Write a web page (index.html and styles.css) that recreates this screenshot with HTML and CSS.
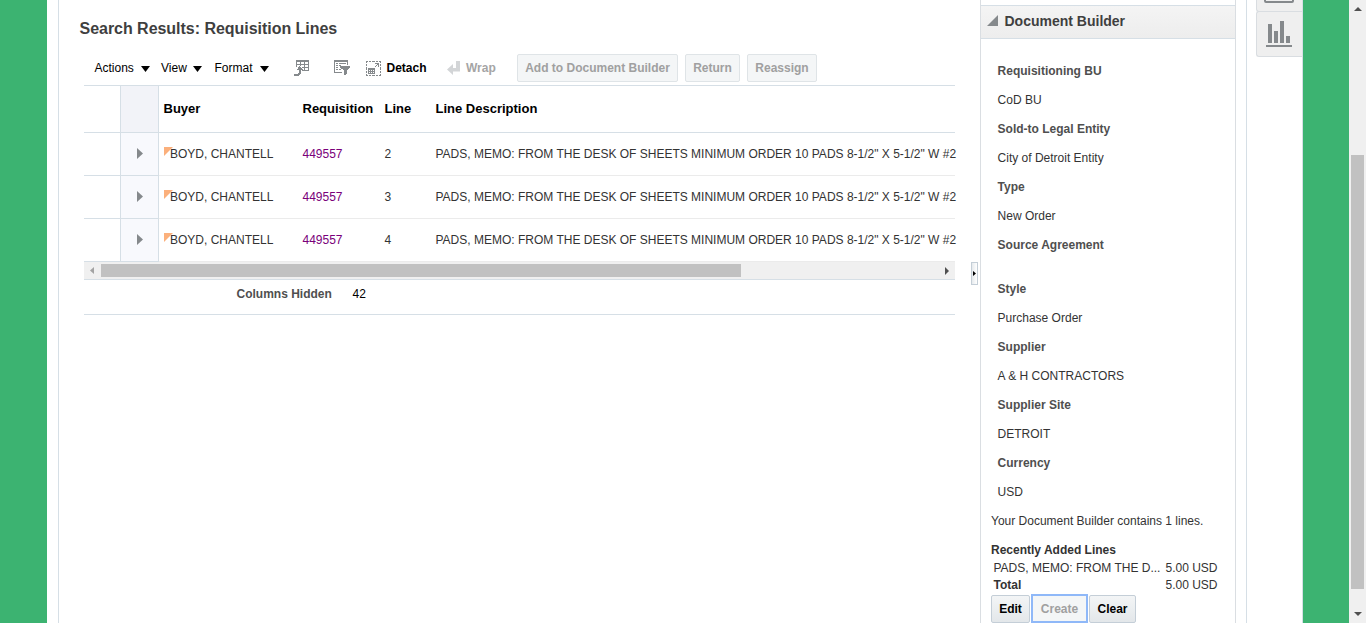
FILE: index.html
```html
<!DOCTYPE html>
<html lang="en">
<head>
<meta charset="utf-8">
<title>Requisition Lines</title>
<link rel="stylesheet" href="styles.css">
</head>
<body>
<div class="page">
  <div class="band"></div>
  <div class="gutter"></div>
  <main class="main">
    <h1 class="title">Search Results: Requisition Lines</h1>
    <div class="toolbar">
      <span class="menu actions">Actions<svg width="9" height="6" viewBox="0 0 9 6"><path d="M0 0h9L4.500 6z"/></svg></span>
      <span class="menu view">View<svg width="9" height="6" viewBox="0 0 9 6"><path d="M0 0h9L4.500 6z"/></svg></span>
      <span class="menu format">Format<svg width="9" height="6" viewBox="0 0 9 6"><path d="M0 0h9L4.500 6z"/></svg></span>
      <svg class="icon export" width="16" height="16" viewBox="0 0 16 16" shape-rendering="crispEdges" fill="#85898c">
        <path d="M2 0h13v2H2zM2 2h1v5H2zM6 2h1v4H6zM10 2h1v9h-1zM14 2h1v9h-1zM2 4h13v1H2zM8 7h7v1H8zM8 10h7v1H8z"/>
        <path d="M5 6h1v1h1v1h1v1h1v1H7v4H6v1H5v1H0v-2h4v-1h1v-3H3V9h1V7h1z"/>
      </svg>
      <svg class="icon query" width="17" height="16" viewBox="0 0 17 16" shape-rendering="crispEdges" fill="#85898c">
        <path d="M0 0h14v2H0zM0 2h1v11H0zM13 2h1v3h-1zM0 12h8v1H0zM2 3h2v1H2zM5 3h7v1H5zM2 5h2v1H2zM5 5h2v1H5zM2 7h2v1H2zM2 9h2v1H2zM5 9h2v1H5z"/>
        <path d="M6 6h10v2h-1v1h-1v1h-1v4h-1v1h-2v-5H9V9H7V8H6z"/>
      </svg>
      <svg class="icon detach" width="15" height="15" viewBox="0 0 15 15" shape-rendering="crispEdges" fill="#85898c">
        <path d="M0 0h2v1H0zM3 0h2v1H3zM6 0h3v1H6zM10 0h2v1h-2zM13 0h2v1h-2zM0 14h2v1H0zM3 14h2v1H3zM6 14h3v1H6zM10 14h2v1h-2zM13 14h2v1h-2zM0 0h1v2H0zM0 3h1v2H0zM0 6h1v3H0zM0 10h1v2H0zM0 13h1v2H0zM14 0h1v2h-1zM14 3h1v2h-1zM14 6h1v3h-1zM14 10h1v2h-1zM14 13h1v2h-1z"/>
        <path d="M2 7h7v2H2zM2 9h1v4H2zM4 9h1v4H4zM6 9h1v4H6zM8 9h1v4H8zM2 10h7v1H2zM2 12h7v1H2zM9 2h4v4h-1V4h-1v1h-1v1H9V5h1V4h1V3H9z"/>
      </svg>
      <b class="detach-text">Detach</b>
      <svg class="icon wrap" width="13" height="14" viewBox="0 0 13 14" fill="#d3d5d7"><path d="M9 0h4v10.500H6V14L0 8.500 6 3v4h3z"/></svg>
      <b class="wrap-text">Wrap</b>
      <button class="btn off add">Add to Document Builder</button>
      <button class="btn off ret">Return</button>
      <button class="btn off rea">Reassign</button>
    </div>
    <section class="table">
      <div class="row head"><i></i><i class="mark"></i><b>Buyer</b><b>Requisition</b><b>Line</b><b>Line Description</b></div>
      <div class="row"><i></i><i class="mark"><svg width="6" height="11" viewBox="0 0 6 11"><path d="M0 0l6 5.500L0 11z"/></svg></i><span class="buyer">BOYD, CHANTELL</span><a>449557</a><span>2</span><span class="desc">PADS, MEMO: FROM THE DESK OF SHEETS MINIMUM ORDER 10 PADS 8-1/2" X 5-1/2" W #2</span></div>
      <div class="row"><i></i><i class="mark"><svg width="6" height="11" viewBox="0 0 6 11"><path d="M0 0l6 5.500L0 11z"/></svg></i><span class="buyer">BOYD, CHANTELL</span><a>449557</a><span>3</span><span class="desc">PADS, MEMO: FROM THE DESK OF SHEETS MINIMUM ORDER 10 PADS 8-1/2" X 5-1/2" W #2</span></div>
      <div class="row"><i></i><i class="mark"><svg width="6" height="11" viewBox="0 0 6 11"><path d="M0 0l6 5.500L0 11z"/></svg></i><span class="buyer">BOYD, CHANTELL</span><a>449557</a><span>4</span><span class="desc">PADS, MEMO: FROM THE DESK OF SHEETS MINIMUM ORDER 10 PADS 8-1/2" X 5-1/2" W #2</span></div>
      <div class="hscroll"><svg width="4" height="7" viewBox="0 0 4 7" fill="#a3a3a3"><path d="M4 0v7L0 3.500z"/></svg><div class="hthumb"></div><svg class="right" width="4" height="8" viewBox="0 0 4 8" fill="#505050"><path d="M0 0v8l4-4z"/></svg></div>
      <div class="hidden-cols"><b>Columns Hidden</b><span>42</span></div>
    </section>
    <div class="splitter"><svg width="3" height="5" viewBox="0 0 3 5"><path d="M0 0v5l3-2.500z"/></svg></div>
  </main>
  <aside class="panel">
    <header class="panel-head"><svg width="11" height="11" viewBox="0 0 11 11" fill="#85898c"><path d="M11 0v11H0z"/></svg><b>Document Builder</b></header>
    <dl class="fields">
      <dt>Requisitioning BU</dt><dd>CoD BU</dd>
      <dt>Sold-to Legal Entity</dt><dd>City of Detroit Entity</dd>
      <dt>Type</dt><dd>New Order</dd>
      <dt>Source Agreement</dt><dd class="empty"></dd>
      <dt>Style</dt><dd>Purchase Order</dd>
      <dt>Supplier</dt><dd>A &amp; H CONTRACTORS</dd>
      <dt>Supplier Site</dt><dd>DETROIT</dd>
      <dt>Currency</dt><dd>USD</dd>
    </dl>
    <div class="summary">
      <p>Your Document Builder contains 1 lines.</p>
      <p class="recent">Recently Added Lines</p>
      <div class="amount"><span>PADS, MEMO: FROM THE D...</span><span>5.00 USD</span></div>
      <div class="amount"><b>Total</b><span>5.00 USD</span></div>
      <div class="buttons"><button class="btn edit">Edit</button><button class="btn off create">Create</button><button class="btn clear">Clear</button></div>
    </div>
  </aside>
  <div class="rail">
    <div class="tab first"><svg width="30" height="4" viewBox="0 0 30 4" fill="none" stroke="#85898c" stroke-width="2"><path d="M1-2V1q0 1 1 1h26q1 0 1-1V-2"/></svg></div>
    <div class="tab chart"><svg width="26" height="26" viewBox="0 0 26 26" fill="#85898c" shape-rendering="crispEdges"><path d="M2 3h4v19H2zM8 10h4v12H8zM14 0h4v22h-4zM20 15h4v7h-4zM0 24h26v2H0z"/></svg></div>
  </div>
  <div class="band"></div>
  <div class="vscroll"><svg width="8" height="4" viewBox="0 0 8 4" fill="#505050"><path d="M4 0l4 4H0z"/></svg><div class="vthumb"></div><svg class="down" width="8" height="4" viewBox="0 0 8 4" fill="#505050"><path d="M0 0h8L4 4z"/></svg></div>
</div>
</body>
</html>
```
FILE: styles.css
```css
* { box-sizing: border-box; }
body { margin: 0; overflow: hidden; background: #fff; font: 12px/14px "Liberation Sans", Arial, sans-serif; color: #333; }
svg { display: block; flex: none; }
.page { display: grid; grid-template-columns: 47px 12px 921px 256px 67px 46px 17px; height: 623px; }
.band { background: #3cb371; }
.gutter { border-right: 1px solid #d6dfe6; }
.main { position: relative; padding: 20px 25px 0; overflow: hidden; }
.title { margin: 0 0 0 -4.5px; font-size: 16px; line-height: 18px; letter-spacing: -0.03px; color: #3f3f3f; white-space: nowrap; }
.toolbar { display: flex; align-items: center; height: 28px; margin: 16px 0 3px; padding-left: 10.5px; color: #000; white-space: nowrap; }
.menu { display: flex; align-items: center; justify-content: space-between; }
.menu svg { margin-top: 2px; }
.actions { width: 55px; margin-right: 11.5px; }
.view { width: 41px; margin-right: 12.5px; }
.format { width: 54px; margin-right: 25.5px; }
.export { margin-right: 24px; }
.query { margin-right: 15px; }
.detach-text { width: 40px; margin: 0 20.5px 0 5.5px; }
.wrap-text { width: 31px; margin: 0 20px 0 6px; color: #a5a5a5; }
.btn { height: 28px; padding: 0; border: 1px solid #c4ced7; border-radius: 2px; background: linear-gradient(#f3f5f6, #e3e7ea); font: bold 12px/14px "Liberation Sans", Arial, sans-serif; color: #000; white-space: nowrap; }
.btn.off { background: #f4f6f7; border-color: #dfe4e7; color: #a0a0a0; }
.add { width: 161px; margin-right: 7px; }
.ret { width: 55px; margin-right: 7px; }
.rea { width: 70px; }
.table { width: 871px; border-top: 1px solid #d6dfe6; }
.row { display: grid; grid-template-columns: 36px 39px 139px 82px 51px minmax(0, 1fr); height: 43px; align-items: center; border-bottom: 1px solid #ebebeb; white-space: nowrap; }
.row > * { padding-left: 4.5px; }
.row > i { align-self: stretch; padding: 0; border-bottom: 1px solid #d6dfe6; margin-bottom: -1px; }
.row .mark { display: grid; place-items: center; border: solid #d6dfe6; border-width: 0 1px 1px; background: #f8f9fd; fill: #85898c; }
.row.head { height: 47px; padding-bottom: 1px; border-color: #d6dfe6; font-size: 13px; color: #000; }
.head > i { margin-bottom: -2px; }
.row.head .mark { margin-bottom: -2px; background: #f2f3f8; }
.row .mark svg { margin: -1px 0 0 1px; }
.row a { color: #7a007a; }
.row .buyer { position: relative; padding-left: 11px; }
.buyer::before { content: ""; position: absolute; left: 5px; top: 0; border-top: 9px solid #fbb07c; border-right: 9px solid transparent; }
.row .desc { width: 525px; }
.hscroll { display: flex; align-items: center; height: 18px; padding: 0 6px; background: #f0f0f0; border-bottom: 1px solid #d6dfe6; position: relative; }
.hthumb { width: 640px; height: 13px; margin-left: 7px; background: #c1c1c1; }
.right { margin-left: auto; }
.hidden-cols { display: flex; height: 35px; padding: 7px 0 0 152.5px; border-bottom: 1px solid #d6dfe6; color: #000; }
.hidden-cols b { width: 116px; color: #4f4f4f; }
.splitter { position: absolute; left: 912px; top: 262px; width: 7px; height: 23px; display: grid; place-items: center; border: 1px solid #c4ced7; background: linear-gradient(90deg, #e6eaed, #fff); }
.panel { border: solid #dadee2; border-width: 0 1px; padding-top: 5px; overflow: hidden; }
.panel-head { display: flex; align-items: center; gap: 6.5px; height: 34px; padding: 0 0 2px 6px; border: solid #d6dfe6; border-width: 1px 0; background: linear-gradient(#f4f4f4, #ededed); font-size: 14px; color: #3f3f3f; }
.panel-head svg { margin-top: -1px; }
.fields { margin: 0; padding: 18px 0 0 16.6px; }
.fields dt, .fields dd { height: 29px; margin: 0; line-height: 29px; }
.fields dt { font-weight: bold; color: #4f4f4f; }
.fields .empty { height: 15px; }
.summary { padding-left: 10px; }
.summary p { height: 29px; margin: 0; line-height: 29px; white-space: nowrap; }
.summary p.recent { height: 24px; font-weight: bold; }
.amount { display: flex; justify-content: space-between; width: 226.5px; height: 17px; padding-left: 2.5px; line-height: 17px; white-space: nowrap; }
.buttons { display: flex; margin-top: 1px; }
.edit { width: 39px; margin-right: 1px; }
.btn.create { width: 57px; border: 2px solid #8fb8f8; border-radius: 0; margin: -1px 1px 0 0; height: 29px; }
.clear { width: 47px; }
.rail { margin-left: 10px; border-left: 1px solid #d6dfe6; border-right: 1px solid #d6dfe6; }
.tab { margin-left: 9px; border: 1px solid #d9dde1; border-right: 0; border-radius: 3px 0 0 3px; background: #efefef; }
.first { height: 12px; border-top: 0; border-radius: 0 0 0 3px; padding-left: 7px; }
.chart { height: 46px; margin-top: -1px; padding: 9px 0 0 9px; }
.vscroll { display: flex; flex-direction: column; align-items: center; padding: 7px 0; background: #f0f0f0; }
.vthumb { width: 13px; height: 434px; margin-top: 144px; background: #c1c1c1; }
.down { margin-top: auto; }
```
